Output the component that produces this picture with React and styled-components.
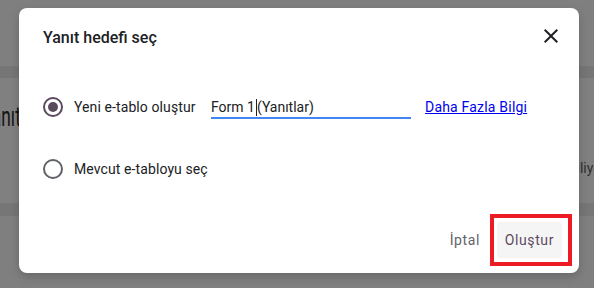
import React from "react";
import styled, { createGlobalStyle } from "styled-components";

const Global = createGlobalStyle`
  html, body { margin: 0; padding: 0; }
  body {
    width: 594px;
    height: 288px;
    overflow: hidden;
    background: #7f7f7f;
    font-family: Roboto, "Liberation Sans", Arial, sans-serif;
  }
`;

const Page = styled.div`
  position: relative;
  width: 594px;
  height: 288px;
  display: flex;
  flex-direction: column;
  overflow: hidden;
`;

const Area = styled.div`
  height: ${(p) => p.$h}px;
  background: ${(p) => p.$bg || "#7f7f7f"};
  flex-shrink: 0;
`;

const Card = styled.div`
  height: 125px;
  background: #808080;
  display: flex;
  justify-content: space-between;
  flex-shrink: 0;
`;

const BigText = styled.div`
  font-size: 28px;
  line-height: 32px;
  color: #141414;
  margin-top: 23px;
  margin-left: -18px;
  white-space: nowrap;
  transform: scaleX(0.62);
  transform-origin: left center;
`;

const SideText = styled.div`
  font-size: 14px;
  color: #2e2e2e;
  margin-top: 82px;
  margin-right: -12px;
  white-space: nowrap;
`;

const Dialog = styled.div`
  position: absolute;
  left: 19px;
  top: 8px;
  width: 560px;
  height: 265px;
  background: #fff;
  border-radius: 8px;
  box-shadow: 0 4px 10px rgba(0, 0, 0, 0.18);
  display: flex;
  flex-direction: column;
  box-sizing: border-box;
`;

const Header = styled.div`
  display: flex;
  justify-content: space-between;
  align-items: flex-start;
  padding: 16px 16px 0 24px;
`;

const Title = styled.div`
  margin-top: 2px;
  font-size: 16px;
  line-height: 24px;
  font-weight: 500;
  color: #202124;
`;

const CloseButton = styled.button`
  width: 24px;
  height: 24px;
  padding: 0;
  border: none;
  background: none;
  display: flex;
  color: #202124;
`;

const Body = styled.div`
  display: flex;
  flex-direction: column;
  gap: 22px;
  padding: 37px 24px 0 24px;
`;

const Row = styled.div`
  display: flex;
  align-items: center;
  height: 40px;
`;

const Radio = styled.span`
  width: 20px;
  height: 20px;
  box-sizing: border-box;
  border-radius: 50%;
  border: 2px solid ${(p) => (p.$checked ? "#5b4a5e" : "#5f6368")};
  display: flex;
  align-items: center;
  justify-content: center;
  flex-shrink: 0;
  &::after {
    content: "";
    width: 10px;
    height: 10px;
    border-radius: 50%;
    background: #5b4a5e;
    display: ${(p) => (p.$checked ? "block" : "none")};
  }
`;

const Label = styled.span`
  margin-left: 11px;
  font-size: 14px;
  line-height: 20px;
  color: #202124;
  letter-spacing: 0.1px;
  width: ${(p) => (p.$w ? `${p.$w}px` : "auto")};
  flex-shrink: 0;
  white-space: nowrap;
`;

const Field = styled.div`
  width: 200px;
  height: 24px;
  box-sizing: border-box;
  padding-top: 2px;
  border-bottom: 2px solid #4285f4;
  font-size: 14px;
  line-height: 20px;
  color: #202124;
  display: flex;
  align-items: center;
  margin-left: 16px;
  flex-shrink: 0;
`;

const Caret = styled.span`
  display: inline-block;
  width: 1px;
  height: 17px;
  background: #202124;
  margin: 0 0 0 1px;
`;

const Link = styled.a`
  margin-left: 14px;
  font-size: 14px;
  line-height: 20px;
  color: #0000ee;
  text-decoration: underline;
  letter-spacing: 0.2px;
`;

const Footer = styled.div`
  margin-top: auto;
  display: flex;
  justify-content: flex-end;
  padding: 0 17px 15px 0;
`;

const Button = styled.button`
  position: relative;
  min-width: 64px;
  height: 36px;
  padding: 0 8px;
  border: none;
  border-radius: 4px;
  background: ${(p) => (p.$active ? "#f6f5f6" : "transparent")};
  color: ${(p) => (p.$active ? "#5b4a5e" : "#5f6368")};
  font-family: Roboto, "Liberation Sans", Arial, sans-serif;
  font-size: 14px;
  letter-spacing: 0.6px;
  font-weight: 400;
`;

const Highlight = styled.span`
  position: absolute;
  top: -8px;
  bottom: -8px;
  left: -7px;
  right: -10px;
  border: 4px solid #ed1c24;
  pointer-events: none;
`;

export default function App() {
  return (
    <>
      <Global />
      <Page>
        <Area $h={66} />
        <Area $h={12} $bg="#767676" />
        <Card>
          <BigText>Yanıtlar</BigText>
          <SideText>Yanıtları kabul ediliyor</SideText>
        </Card>
        <Area $h={13} $bg="#767676" />
        <Area $h={72} />
        <Dialog>
          <Header>
            <Title>Yanıt hedefi seç</Title>
            <CloseButton aria-label="Kapat">
              <svg width="24" height="24" viewBox="0 0 24 24">
                <path
                  fill="currentColor"
                  d="M19 6.41L17.59 5 12 10.59 6.41 5 5 6.41 10.59 12 5 17.59 6.41 19 12 13.41 17.59 19 19 17.59 13.41 12z"
                />
              </svg>
            </CloseButton>
          </Header>
          <Body>
            <Row>
              <Radio $checked />
              <Label $w={121}>Yeni e-tablo oluştur</Label>
              <Field>
                Form 1<Caret />(Yanıtlar)
              </Field>
              <Link href="#">Daha Fazla Bilgi</Link>
            </Row>
            <Row>
              <Radio />
              <Label>Mevcut e-tabloyu seç</Label>
            </Row>
          </Body>
          <Footer>
            <Button>İptal</Button>
            <Button $active>
              Oluştur
              <Highlight />
            </Button>
          </Footer>
        </Dialog>
      </Page>
    </>
  );
}
